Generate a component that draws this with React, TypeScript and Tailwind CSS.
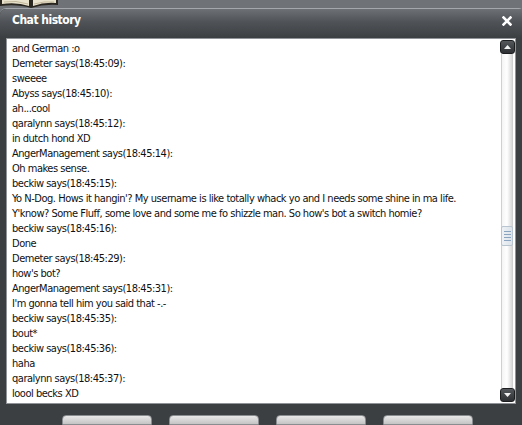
import React from "react";

const lines: string[] = [
  "and German :o",
  "Demeter says(18:45:09):",
  "sweeee",
  "Abyss says(18:45:10):",
  "ah...cool",
  "qaralynn says(18:45:12):",
  "in dutch hond XD",
  "AngerManagement says(18:45:14):",
  "Oh makes sense.",
  "beckiw says(18:45:15):",
  "Yo N-Dog. Hows it hangin'? My username is like totally whack yo and I needs some shine in ma life.",
  "Y'know? Some Fluff, some love and some me fo shizzle man. So how's bot a switch homie?",
  "beckiw says(18:45:16):",
  "Done",
  "Demeter says(18:45:29):",
  "how's bot?",
  "AngerManagement says(18:45:31):",
  "I'm gonna tell him you said that -.-",
  "beckiw says(18:45:35):",
  "bout*",
  "beckiw says(18:45:36):",
  "haha",
  "qaralynn says(18:45:37):",
  "loool becks XD",
];

function Book() {
  return (
    <svg width="60" height="9" viewBox="0 0 60 9" className="absolute left-0 top-0">
      <path d="M0 0 H58 V5 Q44 4 31 8 Q18 4 0 6 Z" fill="#2a2620" />
      <path d="M2 0 H29 V6 Q17 2 2 4 Z" fill="#e9e2cc" />
      <path d="M33 0 H56 V3 Q44 2 33 6 Z" fill="#e9e2cc" />
      <path d="M4 2 Q16 0 28 4" stroke="#a89c7c" strokeWidth="0.6" fill="none" />
      <path d="M34 4 Q44 1 54 2" stroke="#a89c7c" strokeWidth="0.6" fill="none" />
    </svg>
  );
}

function ArrowButton({ up }: { up: boolean }) {
  return (
    <div className="w-[15px] h-[14px] rounded-[3px] border border-[#1c1d1f] bg-gradient-to-b from-[#55585c] to-[#2e3033] flex items-center justify-center">
      <svg width="7" height="4" viewBox="0 0 7 4">
        {up ? <path d="M0 4 L3.5 0 L7 4 Z" fill="#f2f2f2" /> : <path d="M0 0 L3.5 4 L7 0 Z" fill="#f2f2f2" />}
      </svg>
    </div>
  );
}

export default function App() {
  return (
    <div
      className="relative w-[522px] h-[425px] overflow-hidden bg-[#6f7377]"
      style={{ fontFamily: "'DejaVu Sans Condensed', 'DejaVu Sans', sans-serif" }}
    >
      <Book />
      <div className="absolute left-0 top-[8px] w-[522px] h-[417px] rounded-tl-[6px] rounded-tr-[3px] border-t border-[#a4a8ac] bg-[#3c3f42] flex flex-col">
        {/* title bar */}
        <div className="h-[29px] shrink-0 rounded-tl-[6px] bg-gradient-to-b from-[#6d7175] via-[#4f5357] via-45% to-[#3c3f42] flex items-start justify-between pl-[12px] pr-[10px] pt-[3px]">
          <span className="text-white font-bold text-[12px] leading-[16px] tracking-[-0.5px]">Chat history</span>
          <svg width="10" height="10" viewBox="0 0 10 10" className="mt-[4px]">
            <path d="M1.5 1.5 L8.5 8.5 M8.5 1.5 L1.5 8.5" stroke="#ffffff" strokeWidth="2.6" strokeLinecap="square" />
          </svg>
        </div>
        {/* content */}
        <div className="mx-[6px] h-[373px] bg-white border border-[#909498] flex">
          <div className="flex-1 pl-[5px] pt-[2px] text-[#111111] text-[11px] leading-[15px] tracking-[-0.48px] whitespace-nowrap overflow-hidden">
            {lines.map((l, i) => (
              <div key={i}>{l}</div>
            ))}
          </div>
          <div className="w-[16px] flex flex-col items-center pt-[1px] pb-[1px]">
            <ArrowButton up />
            <div className="flex-1 w-[12px] bg-gradient-to-r from-[#f4f4f4] via-[#ffffff] to-[#d8d8d8] border-x border-[#d0d0d0] relative">
              <div className="absolute left-[-1px] top-[172px] w-[12px] h-[20px] bg-gradient-to-r from-[#eef2f6] to-[#dde3ea] border border-[#b8c4d0] rounded-[2px] flex flex-col items-center justify-center gap-[2px]">
                <div className="w-[7px] h-px bg-[#8aa4c0]" />
                <div className="w-[7px] h-px bg-[#8aa4c0]" />
                <div className="w-[7px] h-px bg-[#8aa4c0]" />
                <div className="w-[7px] h-px bg-[#8aa4c0]" />
              </div>
            </div>
            <ArrowButton up={false} />
          </div>
        </div>
        {/* footer buttons */}
        <div className="flex gap-[17px] pl-[62px] pt-[11px]">
          <div className="w-[90px] h-[10px] rounded-t-[4px] bg-gradient-to-b from-[#e8e8e8] to-[#c4c4c4] border border-[#8a8d90]" />
          <div className="w-[90px] h-[10px] rounded-t-[4px] bg-gradient-to-b from-[#e8e8e8] to-[#c4c4c4] border border-[#8a8d90]" />
          <div className="w-[90px] h-[10px] rounded-t-[4px] bg-gradient-to-b from-[#e8e8e8] to-[#c4c4c4] border border-[#8a8d90]" />
          <div className="w-[90px] h-[10px] rounded-t-[4px] bg-gradient-to-b from-[#e8e8e8] to-[#c4c4c4] border border-[#8a8d90]" />
        </div>
      </div>
    </div>
  );
}
